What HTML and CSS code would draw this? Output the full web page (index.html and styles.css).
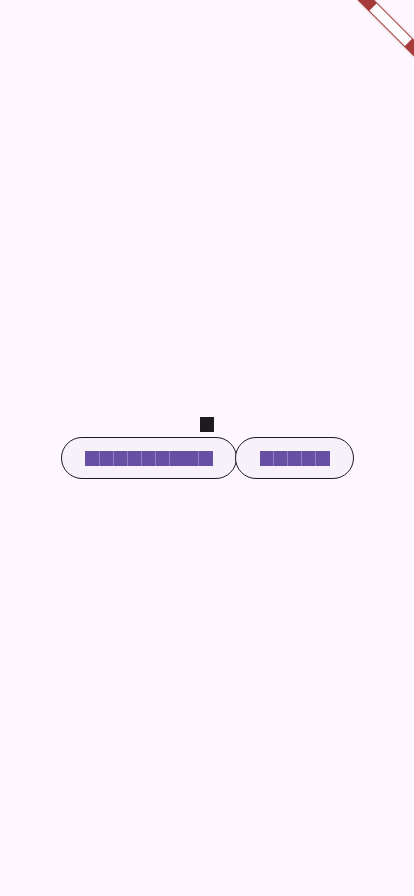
FILE: index.html
```
<!DOCTYPE html>
<html lang="en">
<head>
<meta charset="utf-8">
<meta name="viewport" content="width=device-width, initial-scale=1">
<title>App</title>
<link rel="stylesheet" href="styles.css">
</head>
<body>
<main class="screen">
  <div class="title" aria-label="title"><span class="tofu tofu-dark"></span></div>
  <div class="actions">
    <button class="pill" type="button" aria-label="button one">
      <span class="tofu w15"></span><span class="tofu w14"></span><span class="tofu w14"></span><span class="tofu w14"></span><span class="tofu w14"></span><span class="tofu w14"></span><span class="tofu w28"></span><span class="tofu w14 last"></span>
    </button>
    <button class="pill pill-second" type="button" aria-label="button two">
      <span class="tofu w14"></span><span class="tofu w14"></span><span class="tofu w14"></span><span class="tofu w14"></span><span class="tofu w14 last"></span>
    </button>
  </div>
</main>
<div class="banner-anchor" aria-hidden="true">
  <div class="banner"><span class="banner-text"></span></div>
</div>
</body>
</html>
```
FILE: styles.css
```
html, body {
  margin: 0;
  padding: 0;
  background: #fef7ff;
  font-family: Roboto, "Noto Sans", sans-serif;
  overflow: hidden;
}

.screen {
  height: 896px;
  display: flex;
  flex-direction: column;
  align-items: center;
  justify-content: center;
}

.title {
  height: 15px;
  margin-bottom: 5px;
  display: flex;
}

.tofu {
  display: inline-block;
  height: 15px;
  width: 14px;
  background: #6750a4;
  box-sizing: border-box;
  border-right: 1px solid #8f7fc4;
}

.tofu.last { border-right: none; }
.w15 { width: 15px; }
.w14 { width: 14px; }
.w28 { width: 28.5px; }

.tofu-dark {
  width: 14px;
  background: #1d1b20;
  border-right: none;
}

.actions {
  display: flex;
  align-items: center;
}

.pill {
  height: 42px;
  box-sizing: border-box;
  padding: 0 23px 0 23.5px;
  border: 1px solid #1d1b20;
  border-radius: 21px;
  background: #f7f2f9;
  display: inline-flex;
  align-items: center;
  margin: 0;
  font: inherit;
}

.pill-second {
  margin-left: -1.5px;
}

.banner-anchor {
  position: fixed;
  top: 0;
  right: 0;
  width: 0;
  height: 0;
}

.banner {
  position: absolute;
  left: -40px;
  top: 28px;
  width: 80px;
  height: 12px;
  background: #a73b3b;
  transform-origin: 40px -28px;
  transform: rotate(45deg);
  display: flex;
  align-items: center;
  justify-content: center;
  box-shadow: 0 0 3px rgba(0, 0, 0, 0.15);
}

.banner-text {
  display: block;
  width: 50px;
  height: 10px;
  margin-left: 2px;
  background: #ffffff;
}
```
